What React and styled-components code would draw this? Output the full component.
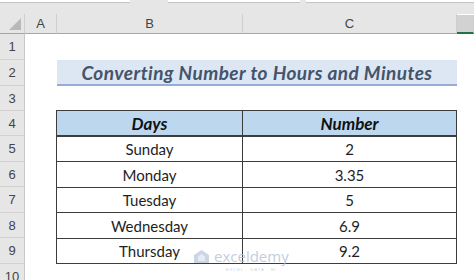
import React from 'react';
import styled, { createGlobalStyle } from 'styled-components';

const ROWS = [26, 26, 25, 25, 26, 25, 26, 25, 26, 25, 26];

const DATA = [
  { day: 'Sunday', num: '2' },
  { day: 'Monday', num: '3.35' },
  { day: 'Tuesday', num: '5' },
  { day: 'Wednesday', num: '6.9' },
  { day: 'Thursday', num: '9.2' },
];

const GlobalStyle = createGlobalStyle`
  html, body {
    margin: 0;
    padding: 0;
    background: #fff;
  }
  body {
    width: 474px;
    height: 280px;
    overflow: hidden;
    font-family: Lato, "Liberation Sans", sans-serif;
  }
`;

function App() {
  return (
    <Window>
      <GlobalStyle />
      <TopBar>
        <FormulaStrip>
          <FieldBox width={130} />
          <FieldGap width={38} />
          <FieldBox width={132} />
          <FieldGap width={6} />
          <FieldBox grow />
        </FormulaStrip>
      </TopBar>
      <Sheet>
        <Corner>
          <CornerMark />
        </Corner>
        <ColHead>A</ColHead>
        <ColHead>B</ColHead>
        <ColHead>C</ColHead>
        <ColHead selected />

        {Array.from({ length: 10 }, (_, i) => (
          <RowHead key={i} style={{ gridRow: i + 2 }}>
            {i + 1}
          </RowHead>
        ))}

        <Title>Converting Number to Hours and Minutes</Title>

        <DataTable>
          <Th>Days</Th>
          <Th>Number</Th>
          {DATA.map(row => (
            <React.Fragment key={row.day}>
              <Td>{row.day}</Td>
              <Td>{row.num}</Td>
            </React.Fragment>
          ))}
        </DataTable>
      </Sheet>

      <Watermark>
        <svg width="19" height="14" viewBox="0 0 19 14">
          <path d="M9.5 1 L17 6 L17 14 L2 14 L2 6 Z" fill="#c3cfe0" />
          <path d="M9.5 5 L13 7.5 L13 12 L6 12 L6 7.5 Z" fill="#e3e9f2" />
        </svg>
        <MarkText>
          <MarkName>exceldemy</MarkName>
          <MarkTag>EXCEL · DATA · BI</MarkTag>
        </MarkText>
      </Watermark>
    </Window>
  );
}

export default App;

const Window = styled.div`
  position: relative;
  width: 474px;
  height: 280px;
  overflow: hidden;
  background: #fff;
`;

const TopBar = styled.div`
  height: 14px;
  background: #e6e6e6;
`;

const FormulaStrip = styled.div`
  display: flex;
  height: 3px;
`;

const FieldBox = styled.div`
  width: ${props => (props.grow ? 'auto' : `${props.width}px`)};
  flex: ${props => (props.grow ? 1 : 'none')};
  background: #fff;
  border-bottom: 1px solid #c4c4c4;
`;

const FieldGap = styled.div`
  width: ${props => props.width}px;
`;

const Sheet = styled.div`
  display: grid;
  grid-template-columns: 25px 32px 186px 214px 1fr;
  grid-template-rows: 20px ${ROWS.slice(0, 10).map(r => `${r}px`).join(' ')};
  background: #fff;
`;

const Corner = styled.div`
  position: relative;
  background: #e6e6e6;
  border-right: 1px solid #cfcfcf;
  border-bottom: 1px solid #a6a6a6;
`;

const CornerMark = styled.div`
  position: absolute;
  right: 3px;
  bottom: 3px;
  width: 0;
  height: 0;
  border-left: 12px solid transparent;
  border-bottom: 12px solid #b9b9b9;
`;

const ColHead = styled.div`
  display: flex;
  align-items: center;
  justify-content: center;
  background: ${props => (props.selected ? '#d2d2d2' : '#e6e6e6')};
  border-right: 1px solid #cfcfcf;
  border-bottom: ${props =>
    props.selected ? '2px solid #217346' : '1px solid #a6a6a6'};
  margin-top: ${props => (props.selected ? '1px' : '0')};
  font-family: "Liberation Sans", Arial, sans-serif;
  font-size: 13px;
  color: #444;
`;

const RowHead = styled.div`
  grid-column: 1;
  display: flex;
  align-items: center;
  justify-content: center;
  background: #e6e6e6;
  border-right: 1px solid #c8c8c8;
  border-bottom: 1px solid #d2d2d2;
  font-family: "Liberation Sans", Arial, sans-serif;
  font-size: 13px;
  color: #444;
`;

const Title = styled.div`
  grid-column: 3 / span 2;
  grid-row: 3;
  display: flex;
  align-items: center;
  justify-content: center;
  background: #dde7f3;
  border-bottom: 2px solid #95acd6;
  font-size: 19px;
  font-weight: 700;
  font-style: italic;
  letter-spacing: 0.45px;
  color: #44546a;
  white-space: nowrap;
`;

const DataTable = styled.div`
  grid-column: 3 / span 2;
  grid-row: 5 / span 6;
  display: grid;
  grid-template-columns: 186px 214px;
  grid-template-rows: ${ROWS.slice(4, 10).map(r => `${r}px`).join(' ')};
  border-top: 1px solid #3c3c3c;
  border-left: 1px solid #3c3c3c;
  margin-top: -1px;
  margin-left: -1px;
`;

const Cell = styled.div`
  display: flex;
  align-items: center;
  justify-content: center;
  border-right: 1px solid #3c3c3c;
  border-bottom: 1px solid #3c3c3c;
`;

const Th = styled(Cell)`
  background: #bdd7ee;
  border-bottom-width: 2px;
  font-size: 17px;
  font-weight: 700;
  font-style: italic;
  color: #111;
`;

const Td = styled(Cell)`
  font-size: 15px;
  color: #1e1e1e;
`;

const Watermark = styled.div`
  position: absolute;
  left: 192px;
  top: 249px;
  display: flex;
  align-items: flex-start;
  gap: 3px;
  opacity: 0.85;
  pointer-events: none;
`;

const MarkText = styled.div`
  display: flex;
  flex-direction: column;
  align-items: center;
`;

const MarkName = styled.span`
  display: block;
  font-family: "Open Sans", sans-serif;
  font-size: 15px;
  line-height: 21px;
  margin-top: -3px;
  color: #b8c6da;
`;

const MarkTag = styled.span`
  display: block;
  font-family: "Liberation Sans", sans-serif;
  font-size: 4px;
  line-height: 5px;
  letter-spacing: 1px;
  color: #c3cdda;
`;
